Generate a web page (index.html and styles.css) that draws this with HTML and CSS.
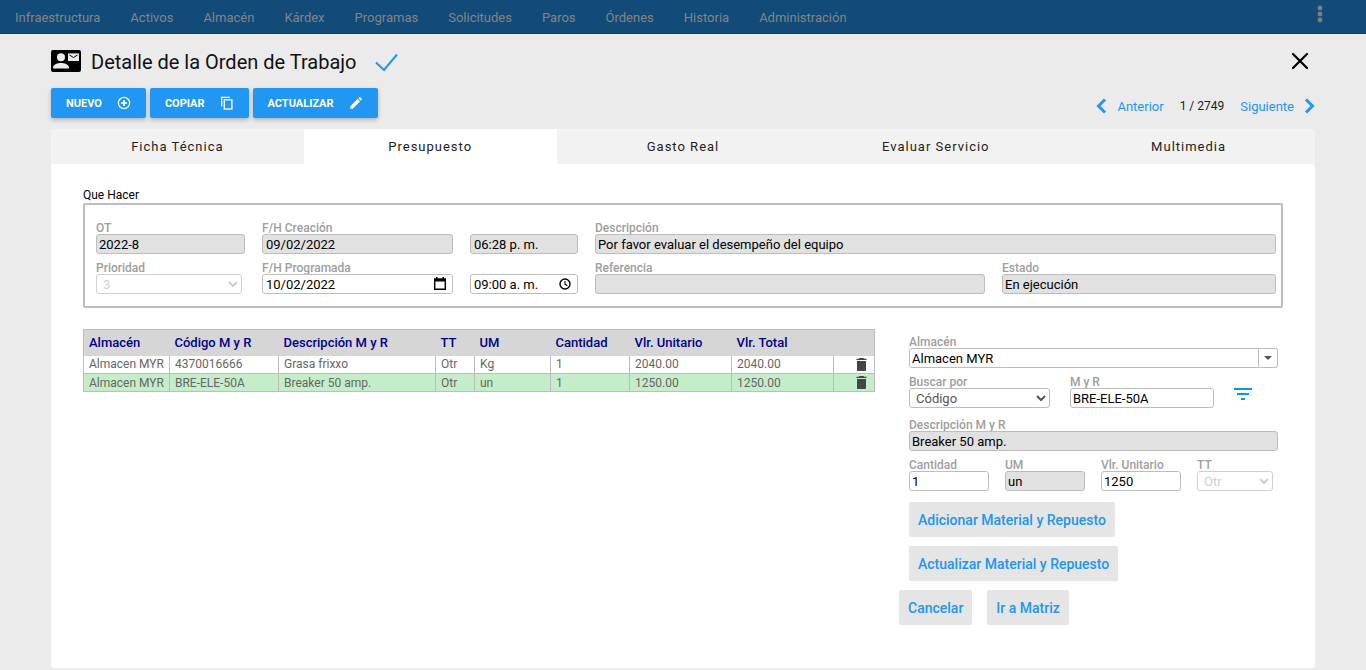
FILE: index.html
```html
<!DOCTYPE html>
<html lang="es">
<head>
	<meta charset="UTF-8">
	<title>Detalle de la Orden de Trabajo</title>
	<link rel="stylesheet" href="styles.css">
</head>
<body>
	<nav class="menu">
		<ul>
			<li><a href="#">Infraestructura</a></li>
			<li><a href="#">Activos</a></li>
			<li><a href="#">Almacén</a></li>
			<li><a href="#">Kárdex</a></li>
			<li><a href="#">Programas</a></li>
			<li><a href="#">Solicitudes</a></li>
			<li><a href="#">Paros</a></li>
			<li><a href="#">Órdenes</a></li>
			<li><a href="#">Historia</a></li>
			<li><a href="#">Administración</a></li>
		</ul>
		<button type="button" class="mas" aria-label="Más opciones">
			<svg width="6" height="18" viewBox="0 0 6 18"><circle cx="3" cy="3" r="2.4"/><circle cx="3" cy="9" r="2.4"/><circle cx="3" cy="15" r="2.4"/></svg>
		</button>
	</nav>

	<main class="modal">
		<header class="titulo">
			<svg class="contacto" width="30" height="22" viewBox="0 0 30 22">
				<rect width="30" height="22" rx="2"/>
				<g fill="#ebebeb"><circle cx="10" cy="7.3" r="4"/><path d="M2 18.4v-1c0-3 5-4.400 8-4.400s8 1.400 8 4.400v1z"/><rect x="17" y="3.400" width="11" height="7.600"/></g>
				<path d="M18.500 5l4 2.500L26.500 5" fill="none" stroke="#000" stroke-width="1"/>
			</svg>
			<h1>Detalle de la Orden de Trabajo</h1>
			<svg class="visto" width="24" height="20" viewBox="0 0 24 20"><path d="M1 9.500l8 7.500L22 1.500" fill="none" stroke="#2196f3" stroke-width="2"/></svg>
			<button type="button" class="cerrar" aria-label="Cerrar">
				<svg width="18" height="18" viewBox="0 0 18 18"><path d="M2 2l14 14M16 2L2 16" stroke="#000" stroke-width="2.200" stroke-linecap="round"/></svg>
			</button>
		</header>

		<div class="acciones">
			<button type="button" class="btn">NUEVO
				<svg width="14" height="14" viewBox="0 0 14 14" fill="none" stroke="#fff"><circle cx="7" cy="7" r="5.600" stroke-width="1.300"/><path d="M7 4v6M4 7h6" stroke-width="1.600"/></svg>
			</button>
			<button type="button" class="btn">COPIAR
				<svg width="14" height="14" viewBox="0 0 14 14" fill="none" stroke="#fff" stroke-width="1.300"><path d="M1.700 10.500V1.400H10"/><rect x="4.300" y="3.800" width="7.600" height="9.200"/></svg>
			</button>
			<button type="button" class="btn">ACTUALIZAR
				<svg width="14" height="14" viewBox="0 0 14 14" fill="#fff"><path d="M1.300 10.300L8.600 3l2.400 2.400-7.300 7.300H1.300zM9.300 2.300l1-1c.3-.3.700-.3 1 0l1.400 1.400c.3.300.3.700 0 1l-1 1z"/></svg>
			</button>
			<div class="paginas">
				<a href="#"><svg width="11" height="16" viewBox="0 0 11 16"><path d="M9 1.500L2.500 8 9 14.500"/></svg>Anterior</a>
				<span>1 / 2749</span>
				<a href="#">Siguiente<svg width="11" height="16" viewBox="0 0 11 16"><path d="M2 1.500L8.500 8 2 14.500"/></svg></a>
			</div>
		</div>

		<div class="tabs" role="tablist">
			<button type="button" role="tab">Ficha Técnica</button>
			<button type="button" role="tab" class="activo" aria-selected="true">Presupuesto</button>
			<button type="button" role="tab">Gasto Real</button>
			<button type="button" role="tab">Evaluar Servicio</button>
			<button type="button" role="tab">Multimedia</button>
		</div>

		<section class="panel">
			<h2>Que Hacer</h2>
			<div class="caja">
				<div class="campo">
					<label for="ot">OT</label>
					<input type="text" id="ot" value="2022-8" readonly>
				</div>
				<div class="campo">
					<label for="fcreacion">F/H Creación</label>
					<input type="text" id="fcreacion" class="fecha" value="09/02/2022" readonly>
				</div>
				<div class="campo">
					<input type="text" aria-label="Hora creación" class="fecha" value="06:28 p. m." readonly>
				</div>
				<div class="campo ancho">
					<label for="descripcion">Descripción</label>
					<input type="text" id="descripcion" value="Por favor evaluar el desempeño del equipo" readonly>
				</div>
				<div class="campo prioridad">
					<label for="prioridad">Prioridad</label>
					<select id="prioridad" disabled><option>3</option></select>
				</div>
				<div class="campo">
					<label for="fprogramada">F/H Programada</label>
					<input type="text" id="fprogramada" class="fecha" value="10/02/2022">
					<svg class="icono" width="14" height="14" viewBox="0 0 14 14"><path d="M1.700 3v9.300h10.600V3" fill="none" stroke="#000" stroke-width="1.400"/><path d="M1 1.200h12v3.300H1zM3 0h1.500v2H3zM9.500 0H11v2H9.500z"/></svg>
				</div>
				<div class="campo">
					<input type="text" aria-label="Hora programada" class="fecha" value="09:00 a. m.">
					<svg class="icono" width="14" height="14" viewBox="0 0 14 14" fill="none" stroke="#000"><circle cx="7" cy="7" r="5" stroke-width="1.400"/><path d="M7 4v3.200l2.300 1.500" stroke-width="1.100"/></svg>
				</div>
				<div class="campo">
					<label for="referencia">Referencia</label>
					<input type="text" id="referencia" readonly>
				</div>
				<div class="campo">
					<label for="estado">Estado</label>
					<input type="text" id="estado" value="En ejecución" readonly>
				</div>
			</div>

			<div class="detalle">
				<div class="lista">
					<table>
						<colgroup>
							<col class="c-almacen"><col class="c-codigo"><col class="c-desc"><col class="c-tt"><col class="c-um"><col class="c-cant"><col class="c-vlr"><col class="c-vlr"><col>
						</colgroup>
						<thead>
							<tr><th>Almacén</th><th>Código M y R</th><th>Descripción M y R</th><th>TT</th><th>UM</th><th>Cantidad</th><th>Vlr. Unitario</th><th>Vlr. Total</th><th></th></tr>
						</thead>
						<tbody>
							<tr>
								<td>Almacen MYR</td><td>4370016666</td><td>Grasa frixxo</td><td>Otr</td><td>Kg</td><td>1</td><td>2040.00</td><td>2040.00</td>
								<td class="borrar"><button type="button" aria-label="Eliminar"><svg width="11" height="13" viewBox="0 0 11 13"><path d="M3.500 0h4l.6.700H10.500V2H.5V.700h2.400zM1 3h9v9c0 .6-.4 1-1 1H2c-.6 0-1-.4-1-1z"/></svg></button></td>
							</tr>
							<tr class="sel">
								<td>Almacen MYR</td><td>BRE-ELE-50A</td><td>Breaker 50 amp.</td><td>Otr</td><td>un</td><td>1</td><td>1250.00</td><td>1250.00</td>
								<td class="borrar"><button type="button" aria-label="Eliminar"><svg width="11" height="13" viewBox="0 0 11 13"><path d="M3.500 0h4l.6.700H10.500V2H.5V.700h2.400zM1 3h9v9c0 .6-.4 1-1 1H2c-.6 0-1-.4-1-1z"/></svg></button></td>
							</tr>
						</tbody>
					</table>
				</div>

				<form class="material">
					<div class="campo">
						<label for="almacen">Almacén</label>
						<div class="combo">
							<input type="text" id="almacen" value="Almacen MYR">
							<button type="button" aria-label="Abrir lista"><svg width="8" height="4" viewBox="0 0 8 4"><path d="M0 0h8L4 4z"/></svg></button>
						</div>
					</div>
					<div class="fila buscar">
						<div class="campo por">
							<label for="buscar">Buscar por</label>
							<select id="buscar"><option>Código</option></select>
						</div>
						<div class="campo myr">
							<label for="myr">M y R</label>
							<input type="text" id="myr" value="BRE-ELE-50A">
						</div>
						<button type="button" class="filtro" aria-label="Filtrar"><svg width="18" height="12" viewBox="0 0 18 12"><path d="M0 0h18v2H0zM3 5h12v2H3zM7 10h4v2H7z"/></svg></button>
					</div>
					<div class="campo">
						<label for="descmyr">Descripción M y R</label>
						<input type="text" id="descmyr" value="Breaker 50 amp." readonly>
					</div>
					<div class="fila">
						<div class="campo corto">
							<label for="cantidad">Cantidad</label>
							<input type="text" id="cantidad" value="1">
						</div>
						<div class="campo corto">
							<label for="um">UM</label>
							<input type="text" id="um" value="un" readonly>
						</div>
						<div class="campo corto">
							<label for="vlr">Vlr. Unitario</label>
							<input type="text" id="vlr" value="1250">
						</div>
						<div class="campo tt">
							<label for="tt">TT</label>
							<select id="tt" disabled><option>Otr</option></select>
						</div>
					</div>
					<div class="botones">
						<button type="button">Adicionar Material y Repuesto</button>
						<button type="button">Actualizar Material y Repuesto</button>
						<div class="pie">
							<button type="button">Cancelar</button>
							<button type="button">Ir a Matriz</button>
						</div>
					</div>
				</form>
			</div>
		</section>
	</main>
</body>
</html>
```
FILE: styles.css
```css
*{
	box-sizing: border-box;
	margin: 0;
	padding: 0;
}
body{
	background: #ebebeb;
	font-family: Roboto, "Liberation Sans", sans-serif;
	font-size: 13px;
	color: #222;
}
button, input, select{
	font-family: inherit;
	font-size: 13px;
}
button{
	border: none;
	background: none;
	cursor: pointer;
}
svg{
	display: block;
	flex: none;
}
a{
	text-decoration: none;
}

/* menu superior */
.menu{
	display: flex;
	justify-content: space-between;
	height: 34px;
	padding: 0 43px 0 15px;
	background: #124a78;
	border-bottom: 1px solid #103f68;
}
.menu ul{
	display: flex;
	gap: 30px;
	list-style: none;
	line-height: 35px;
}
.menu a{
	color: #858585;
}
.mas{
	height: 28px;
	fill: #808080;
}

/* encabezado */
.modal{
	padding: 0 51px 2px;
}
.titulo{
	display: flex;
	align-items: center;
	height: 54px;
}
.titulo h1{
	margin: 2px 19px 0 10px;
	font-size: 20px;
	font-weight: 400;
	color: #111;
}
.visto{
	margin-top: 4px;
}
.cerrar{
	margin-left: auto;
	padding-right: 6px;
}
.acciones{
	display: flex;
	gap: 4px;
	height: 41px;
}
.btn{
	display: flex;
	align-items: center;
	gap: 15px;
	height: 30px;
	padding: 0 15px;
	border-radius: 2px;
	background: #2196f3;
	box-shadow: 0 2px 4px rgba(0, 0, 0, .25);
	color: #fff;
	font-size: 11px;
	font-weight: 700;
}
.paginas{
	display: flex;
	align-items: center;
	gap: 16px;
	height: 36px;
	margin-left: auto;
	font-size: 12px;
}
.paginas a{
	display: flex;
	align-items: center;
	gap: 10px;
	font-size: 13px;
	color: #2196f3;
}
.paginas path{
	fill: none;
	stroke: #2196f3;
	stroke-width: 3;
}

/* pestañas */
.tabs{
	display: flex;
	background: #f2f2f2;
	border-radius: 3px 3px 0 0;
}
.tabs button{
	flex: 1;
	height: 35px;
	letter-spacing: 1px;
	color: #222;
}
.tabs .activo{
	background: #fff;
}
.panel{
	padding: 24px 32px 43px;
	background: #fff;
	border-radius: 0 3px 3px 3px;
}
.panel h2{
	font-size: 12px;
	line-height: 15px;
	font-weight: 400;
	color: #000;
}

/* campos */
.caja{
	display: grid;
	grid-template-columns: 149px 191px 108px 1fr 274px;
	gap: 8px 17px;
	padding: 17px 5px 12px 11px;
	border: 2px solid #bdbdbd;
	border-radius: 2px;
}
.campo{
	position: relative;
	display: flex;
	flex-direction: column;
	justify-content: flex-end;
	height: 32px;
}
.ancho{
	grid-column: span 2;
}
.prioridad{
	padding-right: 3px;
}
.campo label{
	font-size: 12px;
	line-height: 12px;
	font-weight: 500;
	color: #9e9e9e;
	white-space: nowrap;
}
.campo input, .campo select{
	width: 100%;
	height: 20px;
	padding: 0 2px;
	border: 1px solid #bdbdbd;
	border-radius: 3px;
	background: #fff;
	color: #000;
}
.campo input[readonly]{
	background: #e1e1e1;
}
.campo .fecha{
	padding-left: 3px;
}
.campo select{
	color: #555;
}
.campo select:disabled{
	opacity: .7;
	color: #bbb;
}
.icono{
	position: absolute;
	right: 6px;
	bottom: 3px;
}

/* tabla de materiales */
.detalle{
	display: flex;
	align-items: flex-start;
	margin-top: 21px;
}
.lista{
	width: 66%;
}
table{
	width: 100%;
	table-layout: fixed;
	border-collapse: collapse;
	border: 1px solid #bdbdbd;
}
.c-almacen{ width: 86px; }
.c-codigo{ width: 109px; }
.c-desc{ width: 157px; }
.c-tt{ width: 39px; }
.c-um{ width: 76px; }
.c-cant{ width: 79px; }
.c-vlr{ width: 102px; }
th{
	height: 26px;
	padding-left: 5px;
	background: #d6d6d6;
	font-size: 13px;
	font-weight: 500;
	text-align: left;
	white-space: nowrap;
	color: #00008b;
}
td{
	height: 18px;
	padding-left: 5px;
	border: 1px solid #bdbdbd;
	font-size: 12px;
	line-height: 16px;
	white-space: nowrap;
	color: #666;
}
tbody tr:first-child td{
	border-top: none;
}
.sel{
	background: #c5edc9;
}
.borrar button{
	display: block;
	margin-left: 17px;
	fill: #444;
}

/* material y repuesto */
.material{
	flex: 1;
	display: flex;
	flex-direction: column;
	gap: 8px;
	margin: 7px 5px 0 34px;
}
.combo{
	display: flex;
}
.combo input{
	flex: 1;
	border-radius: 3px 0 0 3px;
}
.combo button{
	display: flex;
	align-items: center;
	justify-content: center;
	width: 19px;
	height: 20px;
	border: 1px solid #bdbdbd;
	border-left: none;
	border-radius: 0 3px 3px 0;
	fill: #555;
}
.fila{
	display: flex;
	gap: 16px;
}
.buscar{
	gap: 20px;
	margin-bottom: 3px;
}
.por{
	width: 141px;
}
.myr{
	width: 144px;
}
.filtro{
	height: 32px;
	padding-top: 4px;
	fill: #039be5;
}
.corto{
	width: 80px;
}
.tt{
	width: 76px;
}
.botones{
	display: flex;
	flex-direction: column;
	align-items: flex-start;
	gap: 9px;
	margin-top: 3px;
}
.botones button{
	height: 35px;
	padding: 0 9px;
	border-radius: 2px;
	background: #e5e5e5;
	color: #2196f3;
	font-size: 14px;
	font-weight: 500;
}
.pie{
	display: flex;
	gap: 15px;
	margin-left: -10px;
}
```
